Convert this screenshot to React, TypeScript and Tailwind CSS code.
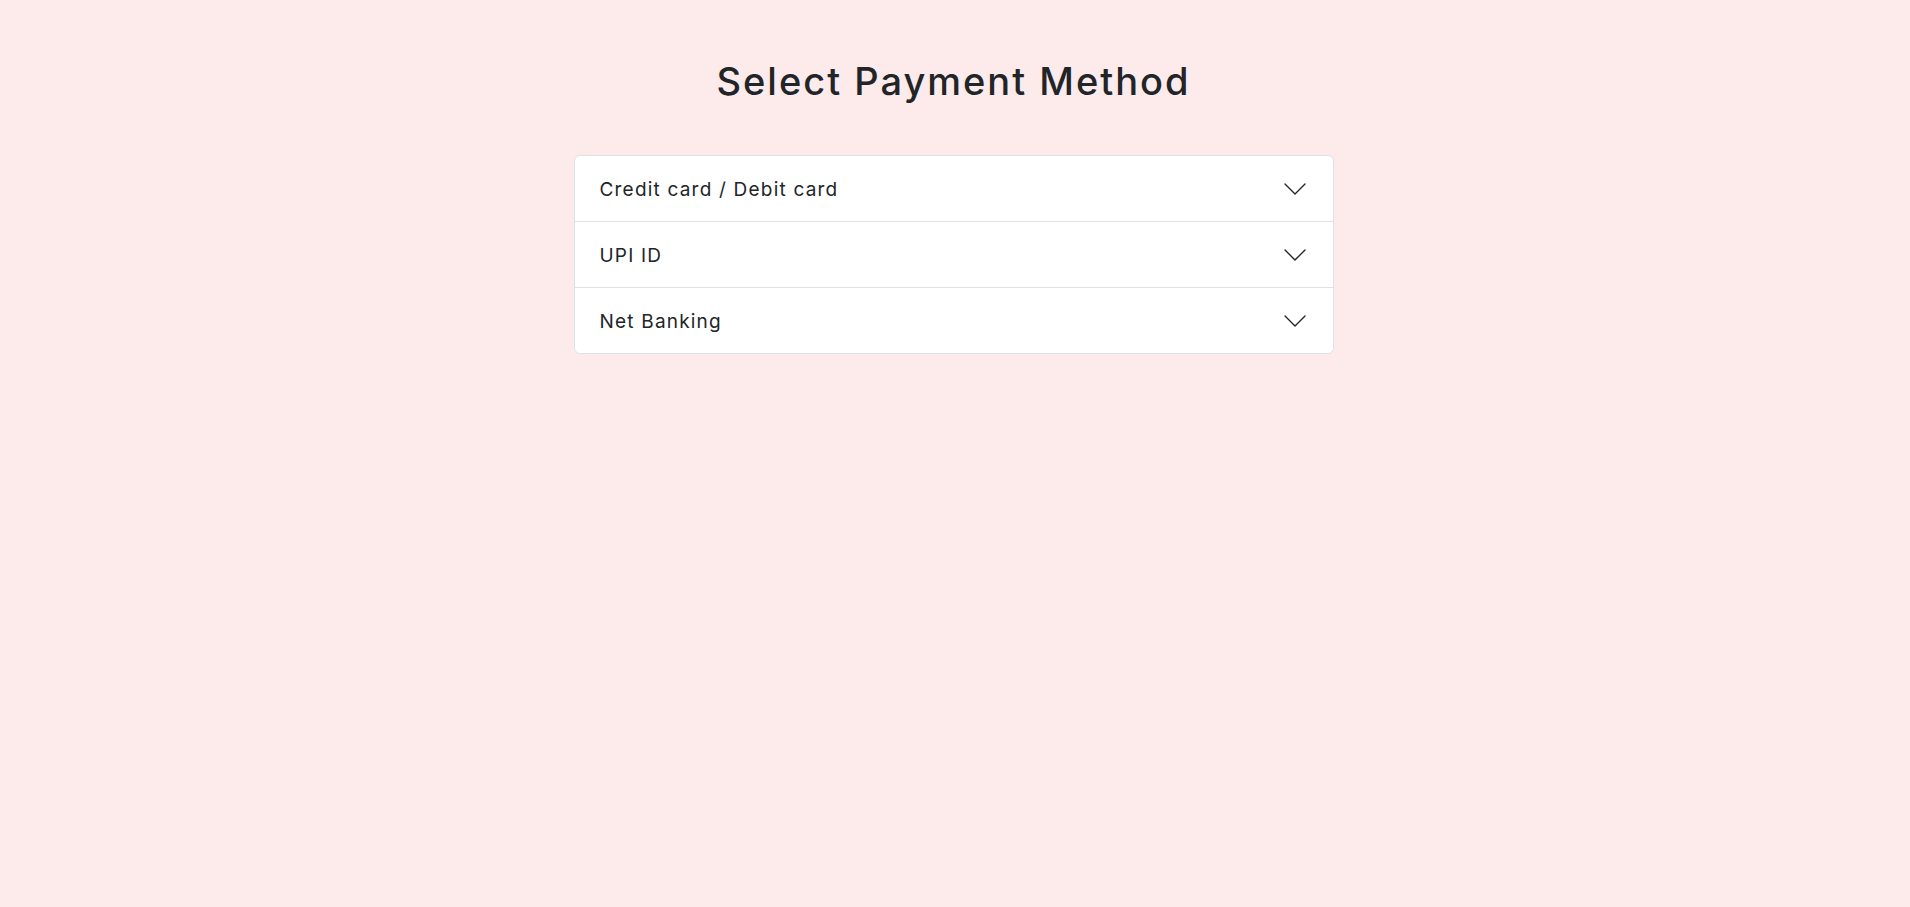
import { useState } from 'react';

const methods = ['Credit card / Debit card', 'UPI ID', 'Net Banking'];

function Chevron() {
  return (
    <svg width="22" height="12" viewBox="0 0 22 12" fill="none" className="shrink-0">
      <path d="M1 1L11 11L21 1" stroke="#212529" strokeWidth="1.4" strokeLinecap="round" strokeLinejoin="round" />
    </svg>
  );
}

export default function App() {
  const [open, setOpen] = useState<number | null>(null);

  return (
    <div
      className="min-h-screen bg-[#fcebea] text-[#212529]"
      style={{ fontFamily: 'Inter, "Open Sans", sans-serif' }}
    >
      <div className="pt-[57px] pr-[3px]">
        {/* Header */}
        <h1 className="text-center text-[38px] leading-[48px] font-medium tracking-[2px]">
          Select Payment Method
        </h1>

        {/* Accordion */}
        <div className="mx-auto mt-[50px] w-[760px] bg-white border border-[#dee2e6] rounded-[6px] overflow-hidden">
          {methods.map((m, i) => (
            <div key={m} className={i > 0 ? 'border-t border-[#dee2e6]' : ''}>
              <button
                onClick={() => setOpen(open === i ? null : i)}
                className="w-full h-[65px] flex items-center justify-between pl-[25px] pr-[27px] pt-[3px] text-left text-[19px] tracking-[1.2px]"
              >
                <span>{m}</span>
                <span className="-mt-[3px] flex">
                  <Chevron />
                </span>
              </button>
            </div>
          ))}
        </div>
      </div>
    </div>
  );
}
